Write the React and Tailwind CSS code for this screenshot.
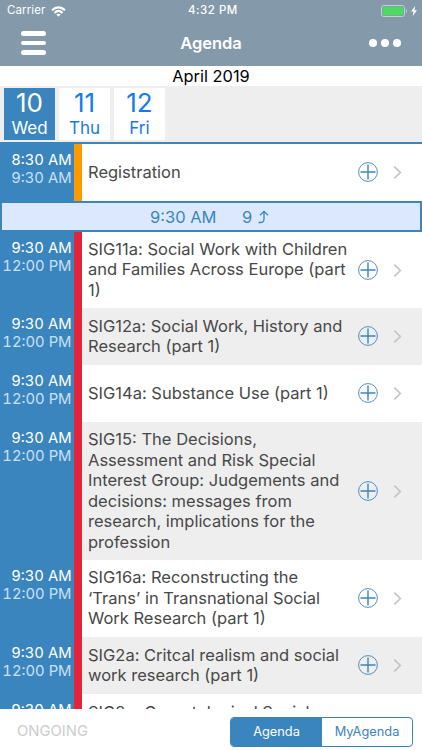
import React from 'react';

const days = [
  { number: '10', name: 'Wed', active: true },
  { number: '11', name: 'Thu' },
  { number: '12', name: 'Fri' },
];

const sessions = [
  { lines: ['SIG11a: Social Work with Children', 'and Families Across Europe (part', '1)'], height: 'h-[76px]' },
  { lines: ['SIG12a: Social Work, History and', 'Research (part 1)'], height: 'h-[57px]' },
  { lines: ['SIG14a: Substance Use (part 1)'], height: 'h-[57px]' },
  {
    lines: [
      'SIG15: The Decisions,',
      'Assessment and Risk Special',
      'Interest Group: Judgements and',
      'decisions: messages from',
      'research, implications for the',
      'profession',
    ],
    height: 'h-[138px]',
  },
  { lines: ['SIG16a: Reconstructing the', '‘Trans’ in Transnational Social', 'Work Research (part 1)'], height: 'h-[77px]' },
  { lines: ['SIG2a: Critcal realism and social', 'work research (part 1)'], height: 'h-[57px]' },
  { lines: ['SIG3a: Gerontological Social', 'Work (part 1)'], height: 'h-[57px]' },
];

const StatusBar = () => (
  <div className="relative flex h-[22px] items-center justify-between pl-[7px] pr-[5px] text-white">
    <div className="flex items-center gap-[6px]">
      <span className="text-[11.5px] tracking-[0.1px]">Carrier</span>
      <svg width="15" height="11" viewBox="0 0 15 11" fill="none" stroke="currentColor" strokeWidth="2.1">
        <path d="M1 4.2C4.8.4 10.2.4 14 4.2" />
        <path d="M3.5 6.9c2.5-2.4 5.5-2.4 8 0" />
        <path d="M7.5 10.8 5.3 8.6c1.3-1.2 3.1-1.2 4.4 0z" fill="currentColor" stroke="none" />
      </svg>
    </div>
    <span className="absolute left-[188px] text-[11.5px] font-medium tracking-[0.5px]">4:32 PM</span>
    <div className="flex items-center gap-[3px]">
      <svg width="27" height="12" viewBox="0 0 27 12">
        <rect x=".5" y=".5" width="23" height="11" rx="2.2" fill="none" stroke="#c6d0d8" />
        <rect x="1.7" y="1.7" width="20.6" height="8.6" rx="1" fill="#4cd964" />
        <path d="M25 4c1.4.5 1.4 3.5 0 4z" fill="#c6d0d8" />
      </svg>
      <svg width="6" height="10" viewBox="0 0 6 10" fill="white">
        <path d="M4.2 0 0 5.6h2.5L1.7 10 6 4.2H3.5z" />
      </svg>
    </div>
  </div>
);

const Header = () => (
  <header className="h-[66px] bg-[#8499aa]">
    <StatusBar />
    <div className="grid h-[42px] grid-cols-3 items-center pl-[21px] pr-[21px] text-white">
      <div className="flex w-[25px] flex-col gap-[5px]">
        <div className="h-[4.5px] rounded-full bg-white" />
        <div className="h-[4.5px] rounded-full bg-white" />
        <div className="h-[4.5px] rounded-full bg-white" />
      </div>
      <h1 className="text-center text-[16.5px] font-semibold">Agenda</h1>
      <div className="flex justify-end gap-[4px]">
        <div className="size-[8px] rounded-full bg-white" />
        <div className="size-[8px] rounded-full bg-white" />
        <div className="size-[8px] rounded-full bg-white" />
      </div>
    </div>
  </header>
);

const Day = ({ number, name, active }) => (
  <div className={`flex h-[52px] w-[51px] flex-col items-center ${active ? 'bg-[#3b85be] text-white' : 'bg-white text-[#147bea]'}`}>
    <span className="mt-[1px] h-[26px] text-[26px] leading-[28px]">{number}</span>
    <span className="text-[17px] leading-[26px]">{name}</span>
  </div>
);

const SessionRow = ({ lines, start, end, height, bar, shaded }) => (
  <div className={`flex shrink-0 ${height}`}>
    <div className="w-[73.5px] shrink-0 bg-[#3b85be] pr-[2px] pt-[7px] text-right text-[14.8px] tabular-nums leading-[18.3px] text-white">
      <div>{start}</div>
      <div className="text-[#c8e0f5]">{end}</div>
    </div>
    <div className={`w-[8px] shrink-0 ${bar}`} />
    <div className={`flex flex-1 items-center pl-[6.5px] ${shaded ? 'bg-[#eeeeee]' : 'bg-white'}`}>
      <div className="mb-[1px] w-[270px] text-[16.5px] leading-[20.5px] text-[#484848]">
        {lines.map((line) => (
          <div key={line} className="whitespace-nowrap">{line}</div>
        ))}
      </div>
      <svg className="mb-[1px] shrink-0" width="20" height="20" viewBox="0 0 20 20" fill="none" stroke="#3b85be">
        <circle cx="10" cy="10" r="9.4" strokeWidth=".9" />
        <path d="M10 2.5v15M2.5 10h15" strokeWidth="1.4" />
      </svg>
      <svg className="ml-[15px] shrink-0" width="9" height="13" viewBox="0 0 9 13" fill="none" stroke="#c4c4c9" strokeWidth="1.7">
        <path d="m1.3.7 6 5.8-6 5.8" />
      </svg>
    </div>
  </div>
);

const TimeBanner = () => (
  <div className="flex h-[31px] shrink-0 items-center border-2 border-[#3b85be] bg-[#dbe8fe] pl-[148px] pt-[1px] text-[16.5px] text-[#3b85be]">
    <span className="w-[92px]">9:30 AM</span>
    <span>9</span>
    <svg className="ml-[6px]" width="12" height="14" viewBox="0 0 12 14" fill="none" stroke="currentColor" strokeWidth="1.3">
      <path d="M.5 12.5h2c2 0 3.5-1.3 3.5-3.5V1.5M2 5.3l4-4 4 4" />
    </svg>
  </div>
);

const Footer = () => (
  <footer className="flex h-[41px] items-center justify-between bg-white pl-[17px] pr-[9px]">
    <span className="mt-[4px] text-[14.8px] text-[#cccccc]">ONGOING</span>
    <div className="mt-[4px] flex h-[30px] w-[183px] overflow-hidden rounded-[4px] border border-[#3b85be] text-[12.8px]">
      <div className="flex w-[91px] items-center justify-center bg-[#3b85be] text-white">Agenda</div>
      <div className="flex flex-1 items-center justify-center text-[#3b85be]">MyAgenda</div>
    </div>
  </footer>
);

export default function App() {
  return (
    <div className="flex h-[750px] w-[422px] flex-col overflow-hidden bg-white font-['Inter',sans-serif]">
      <Header />
      <div className="h-[20px] text-center text-[16.4px] leading-[20px] text-black">April 2019</div>
      <div className="flex h-[56px] gap-[4px] bg-[#eeeeee] pl-[4px] pt-[2px]">
        {days.map((day) => (
          <Day key={day.name} {...day} />
        ))}
      </div>
      <div className="h-[2px] bg-[#3b85be]" />
      <main className="flex h-[565px] flex-col overflow-hidden">
        <SessionRow lines={['Registration']} start="8:30 AM" end="9:30 AM" height="h-[57px]" bar="bg-[#ff9900]" />
        <TimeBanner />
        {sessions.map((session, i) => (
          <SessionRow key={session.lines[0]} {...session} start="9:30 AM" end="12:00 PM" bar="bg-[#e02638]" shaded={i % 2 === 1} />
        ))}
      </main>
      <Footer />
    </div>
  );
}
